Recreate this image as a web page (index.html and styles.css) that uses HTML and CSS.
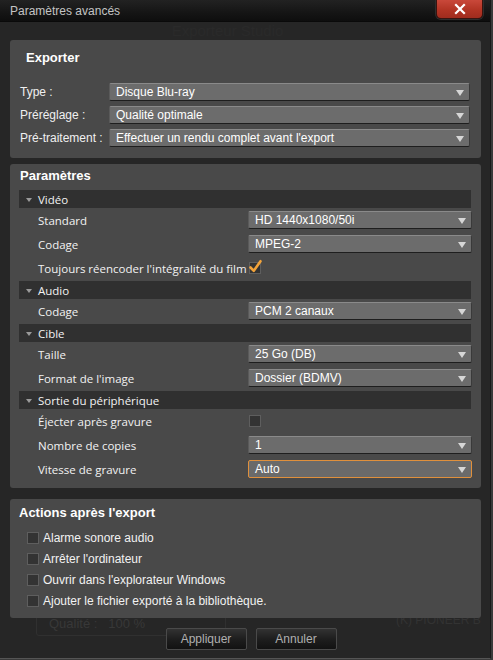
FILE: index.html
```html
<!DOCTYPE html>
<html lang="fr">
<head>
<meta charset="utf-8">
<title>Paramètres avancés</title>
<link rel="stylesheet" href="styles.css">
</head>
<body>
<div class="window">
  <div class="titlebar">
    <span class="title">Paramètres avancés</span>
    <button class="close" aria-label="Fermer">
      <svg width="12" height="12" viewBox="0 0 12 12"><path d="M2 2 L10 10 M10 2 L2 10" stroke="#fff" stroke-width="2.2" stroke-linecap="square"/></svg>
    </button>
  </div>
  <div class="content">
    <div class="ghost-title">Exporteur Studio</div>
    <div class="ghost-box">Qualité :&nbsp;&nbsp; 100 %</div>
    <div class="ghost-right">(K) PIONEER B</div>

    <section class="panel panel-export">
      <h2 class="panel-title export-title">Exporter</h2>
      <div class="frow"><span class="flabel">Type :</span><div class="select">Disque Blu-ray<i class="arrow"></i></div></div>
      <div class="frow"><span class="flabel">Préréglage :</span><div class="select">Qualité optimale<i class="arrow"></i></div></div>
      <div class="frow"><span class="flabel">Pré-traitement :</span><div class="select">Effectuer un rendu complet avant l'export<i class="arrow"></i></div></div>
    </section>

    <section class="panel panel-params">
      <h2 class="panel-title">Paramètres</h2>

      <div class="group"><i class="tri"></i>Vidéo</div>
      <div class="prow"><span class="plabel">Standard</span><div class="select sel-sm">HD 1440x1080/50i<i class="arrow"></i></div></div>
      <div class="prow"><span class="plabel">Codage</span><div class="select sel-sm">MPEG-2<i class="arrow"></i></div></div>
      <div class="prow"><span class="plabel">Toujours réencoder l'intégralité du film</span>
        <span class="cb checked"><svg class="check" width="15" height="15" viewBox="0 0 15 15"><path d="M2.5 8.5 L5.8 11.8 L12.5 2.2" fill="none" stroke="#f2a33a" stroke-width="2.6" stroke-linecap="round" stroke-linejoin="round"/></svg></span></div>

      <div class="group"><i class="tri"></i>Audio</div>
      <div class="prow"><span class="plabel">Codage</span><div class="select sel-sm">PCM 2 canaux<i class="arrow"></i></div></div>

      <div class="group"><i class="tri"></i>Cible</div>
      <div class="prow"><span class="plabel">Taille</span><div class="select sel-sm">25 Go (DB)<i class="arrow"></i></div></div>
      <div class="prow"><span class="plabel">Format de l'image</span><div class="select sel-sm">Dossier (BDMV)<i class="arrow"></i></div></div>

      <div class="group"><i class="tri"></i>Sortie du périphérique</div>
      <div class="prow"><span class="plabel">Éjecter après gravure</span><span class="cb"></span></div>
      <div class="prow"><span class="plabel">Nombre de copies</span><div class="select sel-sm">1<i class="arrow"></i></div></div>
      <div class="prow"><span class="plabel">Vitesse de gravure</span><div class="select sel-sm focused">Auto<i class="arrow"></i></div></div>
    </section>

    <section class="panel panel-actions">
      <h2 class="panel-title">Actions après l'export</h2>
      <div class="arow"><span class="cb"></span>Alarme sonore audio</div>
      <div class="arow"><span class="cb"></span>Arrêter l'ordinateur</div>
      <div class="arow"><span class="cb"></span>Ouvrir dans l'explorateur Windows</div>
      <div class="arow"><span class="cb"></span>Ajouter le fichier exporté à la bibliothèque.</div>
    </section>

    <div class="buttons">
      <button class="btn">Appliquer</button>
      <button class="btn">Annuler</button>
    </div>
  </div>
</div>
</body>
</html>
```

FILE: styles.css
```css
html, body {
  margin: 0;
  padding: 0;
}
body {
  width: 493px;
  height: 660px;
  background: #3a3a3a;
  font-family: "Liberation Sans", Arial, sans-serif;
  font-size: 12px;
  color: #fff;
  overflow: hidden;
}
.window {
  position: relative;
  width: 491px;
  height: 659px;
  background: #262626;
  border-right: 1px solid #1a1a1a;
  border-bottom: 1px solid #555;
  box-sizing: border-box;
  overflow: hidden;
}
.titlebar {
  height: 22px;
  display: flex;
  align-items: flex-start;
  justify-content: space-between;
  background: linear-gradient(#222 0%, #151515 60%, #0e0e0e 100%);
  border-bottom: 1px solid #0a0a0a;
  box-sizing: border-box;
}
.title {
  padding: 4px 0 0 10px;
  color: #c4c4c4;
  font-size: 12px;
  line-height: 14px;
}
.close {
  margin: 0 7px 0 0;
  width: 47px;
  height: 19px;
  padding: 0;
  border: 1px solid #3a1410;
  border-top: none;
  border-radius: 0 0 5px 5px;
  background: linear-gradient(#c9483a, #b23424 55%, #a02c1e);
  box-shadow: 0 0 0 1px #2e2e2e;
  display: flex;
  align-items: center;
  justify-content: center;
}
.content {
  padding: 0 9px 0 10px;
}
.ghost-title {
  height: 18px;
  line-height: 18px;
  text-align: center;
  font-size: 15px;
  color: #2a2a2a;
  padding-right: 36px;
}
.ghost-box {
  position: absolute;
  left: 36px;
  top: 596px;
  width: 190px;
  height: 40px;
  box-sizing: border-box;
  border: 1px solid #303030;
  border-radius: 3px;
  padding: 19px 0 0 12px;
  font-size: 13px;
  color: #383838;
}
.ghost-right {
  position: absolute;
  left: 396px;
  top: 613px;
  font-size: 12px;
  color: #333;
  white-space: nowrap;
}
.panel {
  position: relative;
  z-index: 1;
  background: #494949;
  border-radius: 3px;
  box-sizing: border-box;
}
.panel-title {
  margin: 0;
  font-size: 13px;
  font-weight: bold;
  line-height: 16px;
  color: #fff;
}
.panel-export {
  height: 118px;
  padding: 10px 11px 0 10px;
}
.export-title {
  padding-left: 6px;
  margin-bottom: 14px;
}
.frow {
  display: flex;
  align-items: center;
  height: 23px;
}
.flabel {
  width: 89px;
  flex: none;
  color: #f0f0f0;
}
.select {
  position: relative;
  flex: 1;
  height: 18px;
  box-sizing: border-box;
  background: #6c6c6c;
  border-top: 1px solid #8a8a8a;
  border-bottom: 1px solid #1e1e1e;
  border-left: 1px solid #5a5a5a;
  border-right: 1px solid #3a3a3a;
  border-radius: 2px;
  padding: 0 20px 0 6px;
  line-height: 16px;
  color: #fff;
  white-space: nowrap;
  overflow: hidden;
}
.arrow {
  position: absolute;
  right: 5px;
  top: 6px;
  width: 0;
  height: 0;
  border-left: 4px solid transparent;
  border-right: 4px solid transparent;
  border-top: 6px solid #d6d6d6;
}
.panel-params {
  margin-top: 6px;
  height: 324px;
  padding: 4px 10px 0 9px;
}
.panel-params .panel-title {
  padding-left: 1px;
  margin-bottom: 6px;
}
.group {
  display: flex;
  align-items: center;
  height: 18px;
  margin-top: 1px;
  background: #303030;
  font-family: "Open Sans", "Noto Sans", sans-serif;
  font-size: 11.5px;
  color: #f2f2f2;
}
.tri {
  width: 0;
  height: 0;
  margin: 1px 6px 0 7px;
  border-left: 3px solid transparent;
  border-right: 3px solid transparent;
  border-top: 4px solid #9a9a9a;
}
.prow {
  display: flex;
  align-items: center;
  height: 24px;
  padding-left: 19px;
}
.plabel {
  width: 210px;
  flex: none;
  font-family: "Open Sans", "Noto Sans", sans-serif;
  font-size: 11.5px;
  color: #f2f2f2;
  white-space: nowrap;
}
.sel-sm {
  flex: none;
  width: 224px;
  height: 18px;
}
.focused {
  border: 1px solid #e0903c;
  background: #6a6a6a;
}
.cb {
  position: relative;
  display: inline-block;
  width: 12px;
  height: 12px;
  box-sizing: border-box;
  background: #333;
  border: 1px solid #5e5e5e;
  margin-left: 1px;
  flex: none;
}
.check {
  position: absolute;
  left: -2px;
  top: -4px;
}
.panel-actions {
  margin-top: 11px;
  height: 119px;
  padding: 6px 10px 0 9px;
}
.panel-actions .panel-title {
  margin-bottom: 6px;
}
.arow {
  display: flex;
  align-items: center;
  height: 21px;
  padding-left: 8px;
  color: #f2f2f2;
}
.arow .cb {
  margin: 0 4px 0 0;
}
.buttons {
  display: flex;
  justify-content: center;
  gap: 9px;
  margin-top: 10px;
  padding-left: 11px;
}
.btn {
  position: relative;
  z-index: 1;
  width: 81px;
  height: 22px;
  padding: 0;
  border: 1px solid #4a4a4a;
  border-radius: 2px;
  background: linear-gradient(#323232, #1e1e1e 50%, #121212);
  color: #b0b0b0;
  font-family: "Liberation Sans", Arial, sans-serif;
  font-size: 12px;
}
```
